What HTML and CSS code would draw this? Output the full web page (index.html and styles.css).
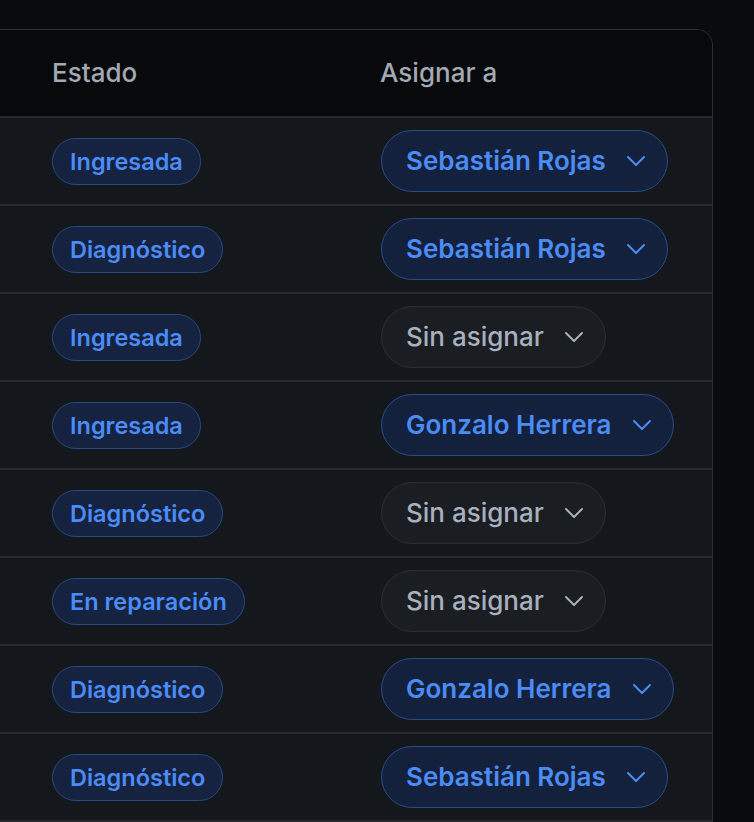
FILE: index.html
```html
<!DOCTYPE html>
<html lang="es">
<head>
<meta charset="utf-8">
<title>Órdenes</title>
<link rel="stylesheet" href="styles.css">
</head>
<body>
<div class="card">
  <div class="row head">
    <div class="cell">Estado</div>
    <div class="cell">Asignar a</div>
  </div>
  <div class="row">
    <div class="cell"><span class="badge">Ingresada</span></div>
    <div class="cell"><button class="select on">Sebastián Rojas<svg class="chev" viewBox="0 0 20 20"><path d="M2 6l8 8 8-8"/></svg></button></div>
  </div>
  <div class="row">
    <div class="cell"><span class="badge">Diagnóstico</span></div>
    <div class="cell"><button class="select on">Sebastián Rojas<svg class="chev" viewBox="0 0 20 20"><path d="M2 6l8 8 8-8"/></svg></button></div>
  </div>
  <div class="row">
    <div class="cell"><span class="badge">Ingresada</span></div>
    <div class="cell"><button class="select off">Sin asignar<svg class="chev" viewBox="0 0 20 20"><path d="M2 6l8 8 8-8"/></svg></button></div>
  </div>
  <div class="row">
    <div class="cell"><span class="badge">Ingresada</span></div>
    <div class="cell"><button class="select on">Gonzalo Herrera<svg class="chev" viewBox="0 0 20 20"><path d="M2 6l8 8 8-8"/></svg></button></div>
  </div>
  <div class="row">
    <div class="cell"><span class="badge">Diagnóstico</span></div>
    <div class="cell"><button class="select off">Sin asignar<svg class="chev" viewBox="0 0 20 20"><path d="M2 6l8 8 8-8"/></svg></button></div>
  </div>
  <div class="row">
    <div class="cell"><span class="badge">En reparación</span></div>
    <div class="cell"><button class="select off">Sin asignar<svg class="chev" viewBox="0 0 20 20"><path d="M2 6l8 8 8-8"/></svg></button></div>
  </div>
  <div class="row">
    <div class="cell"><span class="badge">Diagnóstico</span></div>
    <div class="cell"><button class="select on">Gonzalo Herrera<svg class="chev" viewBox="0 0 20 20"><path d="M2 6l8 8 8-8"/></svg></button></div>
  </div>
  <div class="row">
    <div class="cell"><span class="badge">Diagnóstico</span></div>
    <div class="cell"><button class="select on">Sebastián Rojas<svg class="chev" viewBox="0 0 20 20"><path d="M2 6l8 8 8-8"/></svg></button></div>
  </div>
</div>
</body>
</html>
```
FILE: styles.css
```css
html, body {
  margin: 0;
  padding: 0;
  background: #0a0b0d;
  height: 100%;
  overflow: hidden;
}
body {
  font-family: Inter, "Liberation Sans", sans-serif;
  -webkit-font-smoothing: antialiased;
}
.card {
  margin: 29px 0 0 -20px;
  width: 733px;
  box-sizing: border-box;
  border: 1px solid #2c2f34;
  border-radius: 0 16px 0 0;
  background: #14171b;
  overflow: hidden;
}
.row {
  display: grid;
  grid-template-columns: 328px 1fr;
  padding-left: 47px;
  height: 86px;
  border-bottom: 2px solid #262a2f;
  align-items: center;
}
.head {
  background: #07090b;
  border-bottom-color: #24272c;
}
.cell {
  padding: 0 24px;
}
.head .cell {
  font-size: 26px;
  font-weight: 500;
  color: #a2a9b4;
  line-height: 30px;
}
.badge {
  display: inline-block;
  font-size: 23.5px;
  font-weight: 600;
  line-height: 29px;
  color: #4b8cf6;
  background: #152240;
  border: 1px solid #284a82;
  border-radius: 999px;
  padding: 8px 17px;
}
.select {
  display: inline-flex;
  align-items: center;
  gap: 20px;
  font-family: inherit;
  font-size: 26px;
  font-weight: 600;
  line-height: 30px;
  border-radius: 999px;
  padding: 15px 21px 15px 24px;
  margin-left: 1px;
  cursor: pointer;
}
.select.on {
  color: #4b8cf6;
  background: #14213d;
  border: 1.5px solid #2a4c86;
}
.select.off {
  color: #a7b0bc;
  font-weight: 500;
  background: #1a1d22;
  border: 1.5px solid #2b2f35;
}
.chev {
  width: 20px;
  height: 20px;
  fill: none;
  stroke: currentColor;
  stroke-width: 2;
  stroke-linecap: round;
  stroke-linejoin: round;
}
```
